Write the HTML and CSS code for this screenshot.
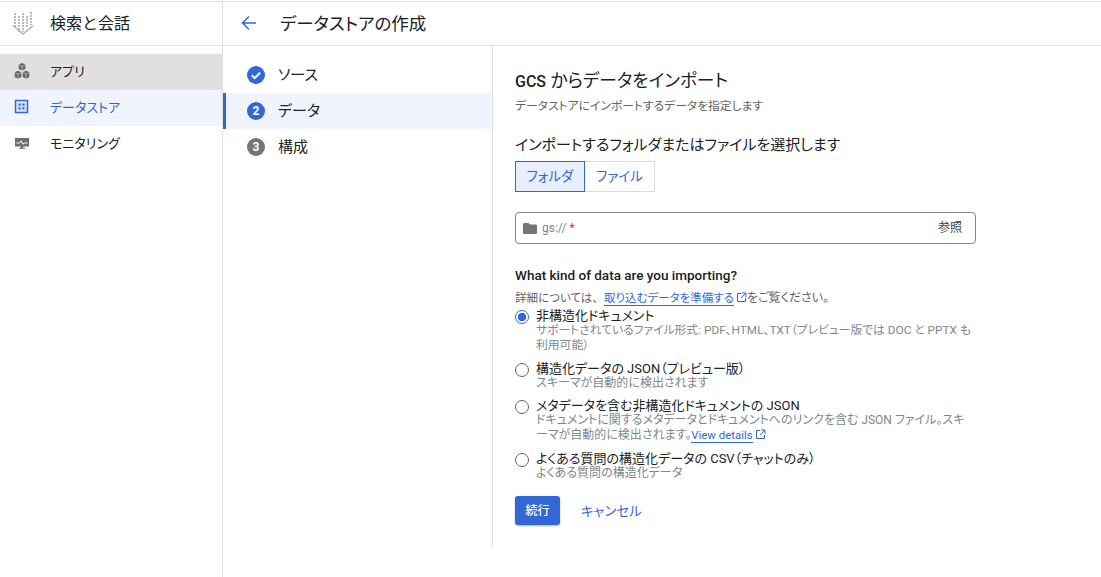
FILE: index.html
```html
<!DOCTYPE html>
<html lang="ja">
<head>
<meta charset="utf-8">
<title>データストアの作成</title>
<link rel="stylesheet" href="styles.css">
</head>
<body>
<div class="app">
  <aside class="sidebar">
    <div class="brand">
      <svg class="brand-icon" width="26" height="26" viewBox="0 0 26 26"><g fill="none" stroke="#a8a8a8" stroke-width="1.600"><path stroke-dasharray="2 1" d="M7 3v15M11 6v16M15 3v19M19 6v12M23 2v13" transform="translate(-2 0)"/><path stroke="#b4b4b4" d="M3 15.500l10 8.500 10-8.500"/></g></svg>
      <span class="brand-name">検索と会話</span>
    </div>
    <nav class="nav">
      <a class="nav-item nav-grey">
        <svg class="nav-icon" width="16" height="16" viewBox="0 0 16 16"><g fill="#5f6368"><path d="M8 0l3.300 1.500v4.400L8 7.500 4.700 5.900V1.500z"/><path d="M4 7.800l3.300 1.500v4.700L4 15.800.7 14V9.300z"/><path d="M12 7.800l3.300 1.500V14L12 15.800 8.700 14V9.300z"/></g><g fill="none" stroke="#e0e0e0" stroke-width=".6"><path d="M4.700 2L8 3.500 11.300 2M8 3.500v4M.7 9.500L4 11l3.300-1.500M4 11v4.800M8.700 9.500L12 11l3.300-1.500M12 11v4.800"/></g></svg>
        アプリ
      </a>
      <a class="nav-item nav-active">
        <svg class="nav-icon" width="16" height="16" viewBox="0 0 16 16"><rect x="1.500" y="1.500" width="12" height="12" fill="#dbe5f9" stroke="#3367d6" stroke-width="1.500"/><path fill="#3367d6" d="M4.500 4.500h2.200v2.200H4.500zM8.300 4.500h2.200v2.200H8.300zM4.500 8.300h2.200v2.200H4.500zM8.300 8.300h2.200v2.200H8.300z"/></svg>
        データストア
      </a>
      <a class="nav-item">
        <svg class="nav-icon" width="16" height="16" viewBox="0 0 16 16"><path fill="#6b6f73" d="M1 3h14v8.500H9.200v1.200h1.800v1H5v-1h1.800v-1.200H1z"/><path fill="none" stroke="#fff" stroke-width="1" d="M2.500 8h3l1.500-2.200 2 3.500 1.200-1.300h3.300"/></svg>
        モニタリング
      </a>
    </nav>
  </aside>
  <div class="page">
    <header class="page-head">
      <svg width="18" height="18" viewBox="0 0 18 18"><path fill="none" stroke="#3367d6" stroke-width="1.500" d="M16 9H3M9 2.500L2.500 9 9 15.500"/></svg>
      <h1 class="page-title">データストアの作成</h1>
    </header>
    <div class="page-body">
      <ol class="steps">
        <li class="step">
          <svg width="18" height="18" viewBox="0 0 18 18"><circle cx="9" cy="9" r="9" fill="#3367d6"/><path fill="none" stroke="#fff" stroke-width="2" d="M4.800 9.200l2.900 2.900 5.500-5.600"/></svg>
          <span class="step-text">ソース</span>
        </li>
        <li class="step step-active"><span class="step-num num-blue">2</span><span class="step-text">データ</span></li>
        <li class="step"><span class="step-num num-grey">3</span><span class="step-text">構成</span></li>
      </ol>
      <main class="form">
        <h2 class="form-title"><span class="latin">GCS</span> からデータをインポート</h2>
        <p class="form-sub">データストアにインポートするデータを指定します</p>
        <p class="pick-label">インポートするフォルダまたはファイルを選択します</p>
        <div class="toggle">
          <button class="toggle-btn toggle-on">フォルダ</button>
          <button class="toggle-btn toggle-off">ファイル</button>
        </div>
        <div class="field">
          <svg width="14" height="14" viewBox="0 0 14 14"><path fill="#757575" d="M1.300 2h4.200l1.400 1.500h5.800c.7 0 1.300.6 1.300 1.300v6.900c0 .7-.6 1.300-1.300 1.300H1.300C.6 13 0 12.400 0 11.700V3.300C0 2.600.6 2 1.300 2z"/></svg>
          <span class="field-ph">gs:// <span class="req">*</span></span>
          <span class="field-btn">参照</span>
        </div>
        <h3 class="kind-title">What kind of data are you importing?</h3>
        <p class="kind-help">詳細については、<a class="link link-gap">取り込むデータを準備する</a><svg class="ext" width="11" height="11" viewBox="0 0 11 11"><path fill="none" stroke="#3367d6" stroke-width="1" d="M5 1.500H1.500v8h8V6M6 1h4v4M10 1L5 6"/></svg><span class="help-end">をご覧ください。</span></p>
        <div class="radios">
          <div class="radio">
            <span class="dot dot-on"></span>
            <div class="radio-text">
              <div class="radio-label">非構造化ドキュメント</div>
              <div class="radio-desc radio-desc-tight">サポートされているファイル形式: PDF、HTML、TXT（プレビュー版では DOC と PPTX も利用可能）</div>
            </div>
          </div>
          <div class="radio">
            <span class="dot"></span>
            <div class="radio-text">
              <div class="radio-label">構造化データの JSON（プレビュー版）</div>
              <div class="radio-desc">スキーマが自動的に検出されます</div>
            </div>
          </div>
          <div class="radio">
            <span class="dot"></span>
            <div class="radio-text">
              <div class="radio-label">メタデータを含む非構造化ドキュメントの JSON</div>
              <div class="radio-desc">ドキュメントに関するメタデータとドキュメントへのリンクを含む JSON ファイル。スキーマが自動的に検出されます。<a class="link link-small">View details</a><svg class="ext" width="11" height="11" viewBox="0 0 11 11"><path fill="none" stroke="#3367d6" stroke-width="1" d="M5 1.500H1.500v8h8V6M6 1h4v4M10 1L5 6"/></svg></div>
            </div>
          </div>
          <div class="radio">
            <span class="dot"></span>
            <div class="radio-text">
              <div class="radio-label">よくある質問の構造化データの CSV（チャットのみ）</div>
              <div class="radio-desc">よくある質問の構造化データ</div>
            </div>
          </div>
        </div>
        <div class="actions">
          <button class="btn-primary">続行</button>
          <button class="btn-text">キャンセル</button>
        </div>
      </main>
    </div>
  </div>
</div>
</body>
</html>
```
FILE: styles.css
```css
* { box-sizing: border-box; }
html, body { margin: 0; height: 100%; }
body {
  font-family: Roboto, "Noto Sans CJK JP", sans-serif;
  color: #202124;
  background: #fff;
  overflow: hidden;
  font-feature-settings: "palt";
}
.app { display: flex; height: 577px; border-top: 1px solid #e0e0e0; margin-top: 1px; }
.sidebar { width: 223px; flex: none; border-right: 1px solid #e0e0e0; }
.brand { height: 44px; display: flex; align-items: center; gap: 14px; padding: 0 0 2px 10px; border-bottom: 1px solid #e0e0e0; }
.brand-name { font-size: 16px; font-feature-settings: normal; margin-bottom: 1px; }
.nav { padding-top: 8px; display: flex; flex-direction: column; }
.nav-item { height: 36px; display: flex; align-items: center; gap: 20px; padding: 0 0 4px 14px; font-size: 13px; }
.nav-icon { margin-top: 2px; }
.nav-grey { background: #e0e0e0; }
.nav-active { background: #eff4fe; color: #3367d6; }
.page { flex: 1; display: flex; flex-direction: column; min-width: 0; }
.page-head { height: 44px; flex: none; display: flex; align-items: center; gap: 22px; padding: 0 0 2px 17px; border-bottom: 1px solid #e0e0e0; }
.page-title { margin: 0 0 1px; font-size: 17.500px; font-weight: 400; }
.page-body { display: flex; align-items: flex-start; }
.steps { list-style: none; margin: 0; padding: 11px 0 0; width: 270px; flex: none; height: 502px; border-right: 1px solid #e0e0e0; }
.step { height: 36px; display: flex; align-items: center; gap: 13px; padding-left: 24px; font-size: 15px; }
.step-text { margin-bottom: 3px; }
.step-active { background: #eff4fe; box-shadow: inset 3px 0 0 #3367d6; }
.step-num { width: 18px; height: 18px; border-radius: 50%; color: #fff; font-size: 12px; font-weight: 700; display: flex; align-items: center; justify-content: center; }
.num-blue { background: #3367d6; }
.num-grey { background: #757575; }
.form { width: 484px; padding: 25px 0 0 22px; }
.form-title { margin: 0; font-size: 17.700px; font-weight: 400; line-height: 20px; }
.latin { font-size: 16px; font-weight: 500; }
.form-sub { margin: 6px 0 0; font-size: 11.800px; line-height: 16px; color: #5f6368; }
.pick-label { margin: 21px 0 0; font-size: 15px; line-height: 20px; }
.toggle { display: flex; margin-top: 6px; }
.toggle-btn { height: 31px; width: 70px; padding: 0 0 3px; font: inherit; font-size: 13.500px; color: #3367d6; background: #fff; border: 1px solid #dadce0; }
.toggle-on { background: #e8eefb; border-color: #3367d6; }
.toggle-off { border-left: 0; }
.field { margin-top: 20px; width: 461px; height: 32px; border: 1px solid #80868b; border-radius: 4px; display: flex; align-items: center; padding: 0 13px 0 7px; gap: 5px; font-size: 12px; }
.field-ph { flex: 1; color: #80868b; }
.req { color: #d93025; }
.field-btn { color: #3c4043; margin-bottom: 3px; }
.kind-title { margin: 21px 0 0; font-size: 13.500px; font-weight: 500; line-height: 20px; }
.kind-help { margin: 5px 0 0; font-size: 11.500px; line-height: 16px; color: #5f6368; }
.help-end { font-size: 12px; }
.link { color: #3367d6; border-bottom: 1px solid #3367d6; }
.link-gap { margin-left: 6px; }
.link-small { font-size: 11.400px; }
.ext { vertical-align: -1px; margin-left: 2px; }
.radios { display: flex; flex-direction: column; gap: 7.500px; margin-top: 2px; }
.radio { display: flex; gap: 7px; width: 461px; }
.dot { width: 14px; height: 14px; margin-top: 2px; border: 1px solid #5f6368; border-radius: 50%; flex: none; background: #fff; }
.dot-on { border-color: #3367d6; background: radial-gradient(circle, #3367d6 0 4px, #fff 4.500px); }
.radio-label { font-size: 13px; line-height: 15px; }
.radio-desc { font-size: 12px; line-height: 15px; color: #80868b; }
.radio-desc-tight { font-size: 11.800px; }
.actions { display: flex; align-items: center; gap: 21px; margin-top: 15.500px; }
.btn-primary { width: 45px; height: 29px; padding: 0 0 2px; font: inherit; font-size: 12px; font-weight: 500; color: #fff; background: #3367d6; border: 0; border-radius: 3px; box-shadow: 0 1px 2px rgba(60,64,67,.4); }
.btn-text { font: inherit; font-size: 13.400px; color: #3367d6; background: none; border: 0; padding: 0 0 2px; }
```
